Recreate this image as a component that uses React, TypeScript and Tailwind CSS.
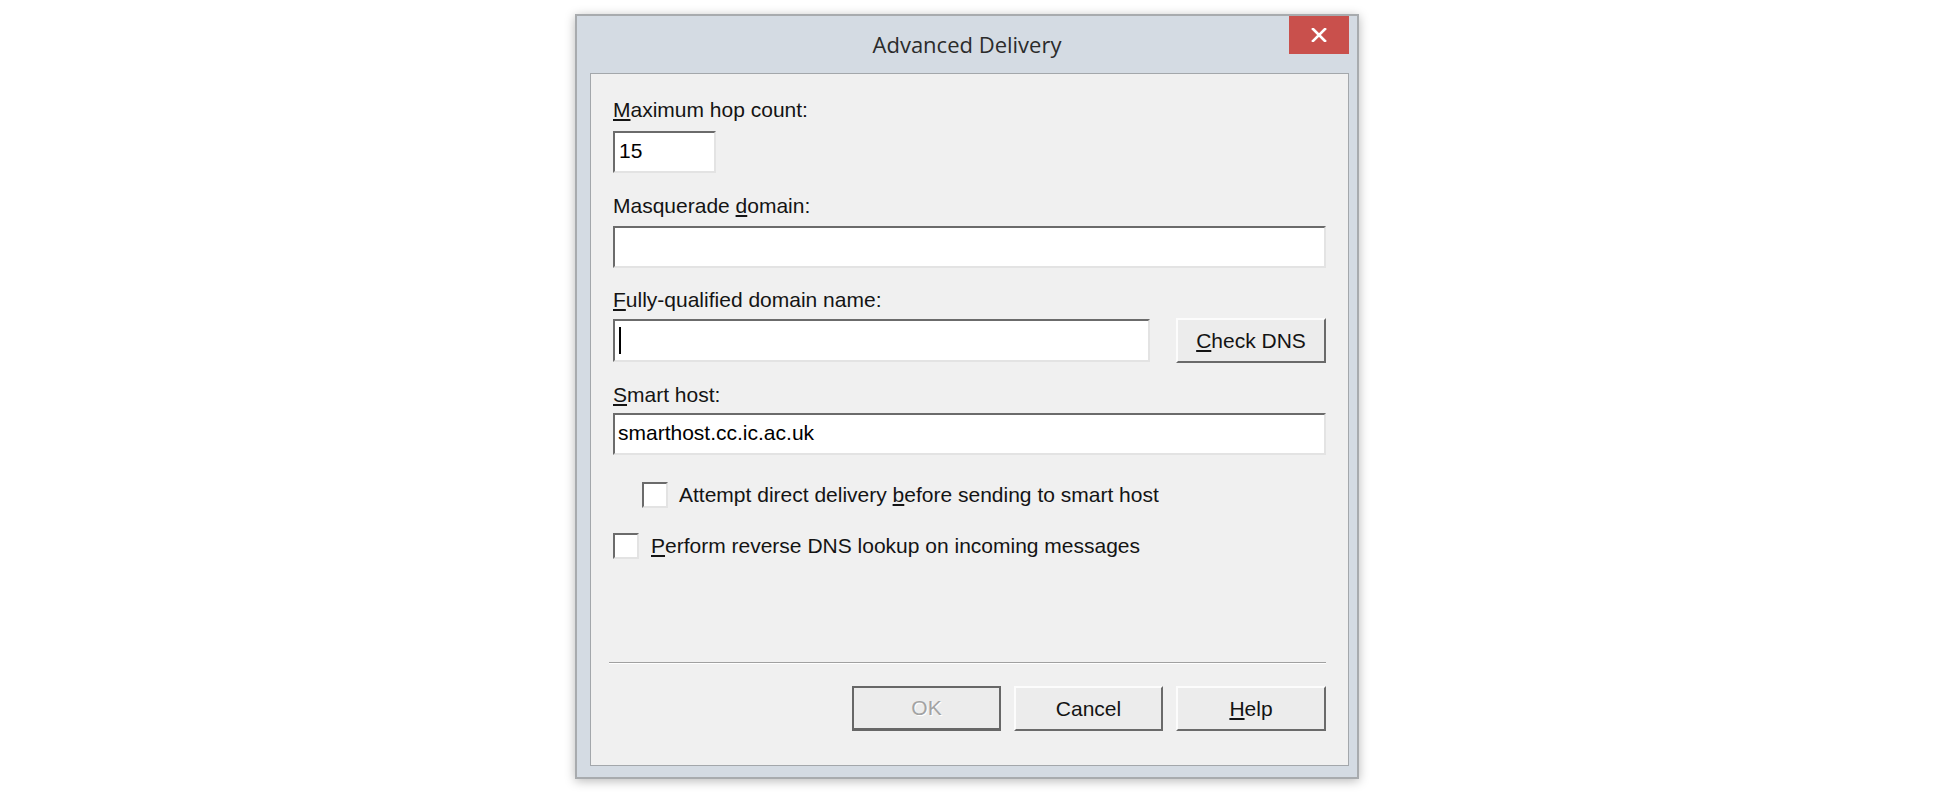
import React from 'react'

const sunken =
  'border-2 border-t-[#6b6b6b] border-l-[#6b6b6b] border-r-[#e3e3e3] border-b-[#e3e3e3] bg-white'

const raised =
  'border-2 border-t-[#fcfcfc] border-l-[#fcfcfc] border-r-[#6a6a6a] border-b-[#6a6a6a] bg-[#ececec]'

function Label({ children }: { children: React.ReactNode }) {
  return <div className="h-[24px] leading-[24px] text-[21px] text-[#141414]">{children}</div>
}

function Checkbox() {
  return <div className={`w-[26px] h-[26px] shrink-0 ${sunken}`} />
}

export default function App() {
  return (
    <div
      className="min-h-[794px] w-full bg-white pt-[14px]"
      style={{ fontFamily: '"Liberation Sans", Arial, sans-serif' }}
    >
      <div className="mx-auto w-[784px] h-[765px] border-2 border-[#a8abae] bg-[#d4dbe3] shadow-[0_2px_10px_rgba(0,0,0,0.28)] flex flex-col">
        {/* title bar */}
        <div className="relative h-[57px] shrink-0 flex items-center justify-center">
          <span
            className="text-[22px] leading-[30px] text-[#2b2b2b] mt-[-1px]"
            style={{ fontFamily: '"Open Sans", "Noto Sans", sans-serif' }}
          >
            Advanced Delivery
          </span>
          <button className="absolute top-0 right-[8px] w-[60px] h-[38px] bg-[#c9504c] flex items-center justify-center">
            <svg width="16" height="14" viewBox="0 0 16 14">
              <path d="M2 1 L14 13 M14 1 L2 13" stroke="white" strokeWidth="2.6" strokeLinecap="square" />
            </svg>
          </button>
        </div>

        {/* client area */}
        <div className="flex-1 ml-[13px] mr-[8px] mb-[11px] border border-[#a3a7ab] bg-[#f0f0f0] flex flex-col px-[22px] pt-[24px] pb-[34px]">
          <Label>
            <u>M</u>aximum hop count:
          </Label>
          <div className={`mt-[9px] w-[103px] h-[42px] ${sunken} pl-[4px] text-[21px] leading-[36px] text-black`}>
            15
          </div>

          <div className="mt-[21px]">
            <Label>
              Masquerade <u>d</u>omain:
            </Label>
          </div>
          <div className={`mt-[8px] w-full h-[42px] ${sunken}`} />

          <div className="mt-[20px]">
            <Label>
              <u>F</u>ully-qualified domain name:
            </Label>
          </div>
          <div className="mt-[6px] flex items-center gap-[26px]">
            <div className={`flex-1 h-[43px] ${sunken} flex items-center pl-[4px]`}>
              <div className="w-[2px] h-[27px] bg-black" />
            </div>
            <button className={`w-[150px] h-[45px] ${raised} text-[21px] text-[#141414]`}>
              <u>C</u>heck DNS
            </button>
          </div>

          <div className="mt-[20px]">
            <Label>
              <u>S</u>mart host:
            </Label>
          </div>
          <div className={`mt-[6px] w-full h-[42px] ${sunken} pl-[3px] text-[21px] leading-[36px] text-black`}>
            smarthost.cc.ic.ac.uk
          </div>

          <div className="mt-[27px] ml-[29px] flex items-center gap-[11px] text-[21px] text-[#141414] leading-[24px]">
            <Checkbox />
            <span>
              Attempt direct delivery <u>b</u>efore sending to smart host
            </span>
          </div>

          <div className="mt-[25px] flex items-center gap-[12px] text-[21px] text-[#141414] leading-[24px]">
            <Checkbox />
            <span>
              <u>P</u>erform reverse DNS lookup on incoming messages
            </span>
          </div>

          <div className="mt-auto -ml-[4px] h-[2px] border-t border-[#a0a0a0] border-b border-b-white" />

          <div className="mt-[22px] flex justify-end gap-[13px]">
            <button className="w-[149px] h-[45px] border-2 border-[#676767] border-b-[3px] bg-[#ececec] text-[21px] text-[#a3a3a3] [text-shadow:1px_1px_0_#ffffff]">
              OK
            </button>
            <button className={`w-[149px] h-[45px] ${raised} text-[21px] text-[#141414]`}>Cancel</button>
            <button className={`w-[150px] h-[45px] ${raised} text-[21px] text-[#141414]`}>
              <u>H</u>elp
            </button>
          </div>
        </div>
      </div>
    </div>
  )
}
